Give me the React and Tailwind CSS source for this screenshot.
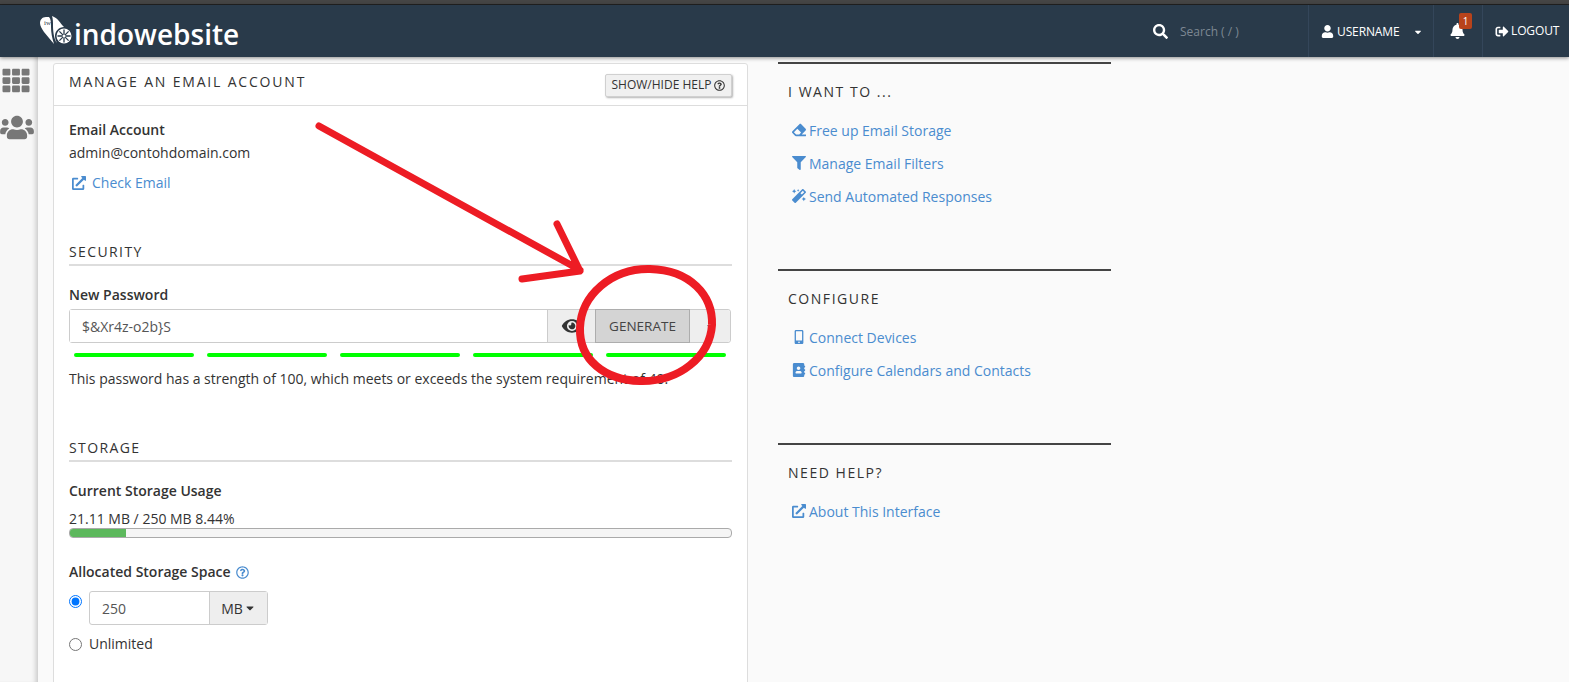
import {
  FaSearch,
  FaUser,
  FaBell,
  FaSignOutAlt,
  FaCaretDown,
  FaTh,
  FaUsers,
  FaExternalLinkAlt,
  FaRegQuestionCircle,
  FaEye,
  FaEraser,
  FaFilter,
  FaMagic,
  FaMobileAlt,
  FaAddressBook,
} from 'react-icons/fa';

const sidebarGroups = [
  {
    title: 'I WANT TO ...',
    height: 'h-[207px]',
    links: [
      { label: 'Free up Email Storage', icon: FaEraser },
      { label: 'Manage Email Filters', icon: FaFilter },
      { label: 'Send Automated Responses', icon: FaMagic },
    ],
  },
  {
    title: 'CONFIGURE',
    height: 'h-[174px]',
    links: [
      { label: 'Connect Devices', icon: FaMobileAlt },
      { label: 'Configure Calendars and Contacts', icon: FaAddressBook },
    ],
  },
  {
    title: 'NEED HELP?',
    height: 'h-[150px]',
    links: [{ label: 'About This Interface', icon: FaExternalLinkAlt }],
  },
];

const strengthBars = [0, 1, 2, 3, 4];

function SectionTitle({ children }) {
  return (
    <div className="h-[24px] border-b-2 border-[#dddddd] text-[14px] leading-[20px] font-medium tracking-[0.1em] text-[#333333]">
      {children}
    </div>
  );
}

function Logo() {
  return (
    <div className="flex items-center ml-[40px] text-white">
      <svg width="36" height="30" viewBox="0 0 36 30" className="mt-[-1px]">
        <path d="M6 1 C2 1 0 4 0 7 C0 10 2 13 4 16 L14 28 C12 22 11 16 11 11 C11 7 11 3 9 1 Z" fill="#fff" />
        <path d="M12 0 C18 2 20 7 24 11 C19 11 15 15 15 20 C15 23 16 25 17 27 C14 24 13 15 13 10 C13 6 13 3 12 0 Z" fill="#fff" />
        <circle cx="24" cy="20" r="7.5" fill="#fff" />
        <g stroke="#293a4a" strokeWidth="1.3">
          <path d="M24 13.5v13M17.5 20h13M19.4 15.4l9.2 9.2M28.6 15.4l-9.2 9.2" />
        </g>
        <circle cx="24" cy="20" r="1.5" fill="#fff" />
        <text x="4" y="9" fontSize="7" fontFamily="'Liberation Serif', serif" fill="#293a4a">iw</text>
      </svg>
      <span className="font-['Open_Sans',sans-serif] text-[28px] leading-[34px] font-semibold ml-[-2px] mt-[5px]">indowebsite</span>
    </div>
  );
}

function Header() {
  return (
    <header className="h-[52px] shrink-0 bg-[#293a4a] flex items-stretch text-white shadow-[0_1px_4px_rgba(0,0,0,0.45)] relative z-10">
      <Logo />
      <div className="ml-auto flex items-center pt-[1px]">
        <FaSearch className="w-[15px] h-[15px] mr-[12px]" />
        <span className="w-[128px] text-[12px] text-[#7d8893]">Search ( / )</span>
      </div>
      <div className="w-[125px] border-l border-[#34465a] flex items-center pt-[1px] pl-[12px] text-[12px] font-medium tracking-[-0.01em]">
        <FaUser className="w-[13px] h-[13px] mr-[3px]" />
        <span>USERNAME</span>
        <FaCaretDown className="w-[10px] h-[10px] ml-[13px]" />
      </div>
      <div className="w-[49px] border-l border-[#34465a] flex items-center pl-[16px]">
        <div className="relative">
          <FaBell className="w-[15px] h-[16px]" />
          <span className="absolute top-[-10px] left-[9px] w-[13px] h-[16px] rounded-[2px] bg-[#b8431b] text-[10px] leading-[16px] text-center text-white">1</span>
        </div>
      </div>
      <div className="w-[87px] border-l border-[#34465a] flex items-center pl-[12px] text-[12px] font-medium tracking-[-0.01em]">
        <FaSignOutAlt className="w-[14px] h-[13px] mr-[2px]" />
        <span>LOGOUT</span>
      </div>
    </header>
  );
}

function ManageCard() {
  return (
    <section className="w-[695px] h-[640px] mt-[6px] bg-white border border-[#dddddd] rounded-t-[3px]">
      <div className="h-[42px] border-b border-[#dddddd] flex items-center justify-between pl-[15px] pr-[15px]">
        <h2 className="text-[14px] font-medium tracking-[0.13em] text-[#333333] mt-[-6px]">MANAGE AN EMAIL ACCOUNT</h2>
        <button className="h-[23px] w-[127px] mt-[1px] flex items-center justify-center gap-[3px] bg-[#f0f0f0] border border-[#d0d0d0] rounded-[2px] text-[12px] text-[#333333] shadow-[1px_1px_2px_rgba(0,0,0,0.3)]">
          SHOW/HIDE HELP
          <FaRegQuestionCircle className="w-[11px] h-[11px]" />
        </button>
      </div>

      <div className="px-[15px]">
        <div className="mt-[14px] text-[14px] leading-[20px] font-semibold text-[#333333]">Email Account</div>
        <div className="mt-[3px] text-[14px] leading-[20px] text-[#333333]">admin@contohdomain.com</div>
        <a className="mt-[10px] flex items-center gap-[6px] pl-[3px] text-[14px] leading-[20px] text-[#4a8ccf]">
          <FaExternalLinkAlt className="w-[14px] h-[14px]" />
          Check Email
        </a>

        <div className="mt-[49px]">
          <SectionTitle>SECURITY</SectionTitle>
        </div>
        <div className="mt-[19px] text-[14px] leading-[20px] font-semibold text-[#333333]">New Password</div>
        <div className="mt-[4px] h-[34px] w-[662px] flex border border-[#cccccc] rounded-[3px] text-[14px]">
          <div className="w-[477px] flex items-center pl-[12px] text-[#555555] bg-white">{'$&Xr4z-o2b}S'}</div>
          <div className="w-[48px] border-l border-[#cccccc] bg-[#eeeeee] flex items-center justify-center text-[#333333]">
            <FaEye className="w-[22px] h-[18px] mr-[-1px]" />
          </div>
          <div className="w-[95px] border border-[#adadad] my-[-1px] bg-[#d4d4d4] flex items-center justify-center text-[13.5px] text-[#444444]">GENERATE</div>
          <div className="flex-1 bg-[#eeeeee] rounded-r-[3px] flex items-center justify-center text-[#333333]">
            <FaCaretDown className="w-[11px] h-[11px]" />
          </div>
        </div>
        <div className="mt-[10px] pl-[5px] flex gap-[13px]">
          {strengthBars.map((bar) => (
            <div key={bar} className="w-[120px] h-[4px] rounded-full bg-[#00ff00]" />
          ))}
        </div>
        <p className="mt-[12px] text-[14px] leading-[20px] text-[#333333] whitespace-nowrap">
          This password has a strength of 100, which meets or exceeds the system requirement of 40.
        </p>

        <div className="mt-[49px]">
          <SectionTitle>STORAGE</SectionTitle>
        </div>
        <div className="mt-[19px] text-[14px] leading-[20px] font-semibold text-[#333333]">Current Storage Usage</div>
        <div className="mt-[8px] text-[14px] leading-[20px] text-[#333333]">21.11 MB / 250 MB 8.44%</div>
        <div className="mt-[-1px] h-[10px] w-[663px] rounded-[4px] bg-[#f5f5f5] border border-[#aaaaaa] overflow-hidden">
          <div className="h-full w-[8.44%] bg-[#5cb85c]" />
        </div>
        <div className="mt-[24px] flex items-center gap-[5px] text-[14px] leading-[20px] font-semibold text-[#333333]">
          Allocated Storage Space
          <FaRegQuestionCircle className="w-[13px] h-[13px] text-[#4a8ccf]" />
        </div>
        <div className="mt-[9px] flex items-start">
          <input type="radio" name="quota" defaultChecked className="mt-[4px] m-0 w-[13px] h-[13px]" />
          <div className="ml-[7px] h-[34px] w-[179px] flex border border-[#cccccc] rounded-[3px] text-[14px]">
            <div className="w-[119px] pl-[12px] flex items-center text-[#555555]">250</div>
            <div className="flex-1 border-l border-[#cccccc] bg-[#eeeeee] flex items-center justify-center gap-[1px] text-[#333333]">
              MB
              <FaCaretDown className="w-[12px] h-[12px]" />
            </div>
          </div>
        </div>
        <div className="mt-[9px] flex items-center text-[14px] leading-[20px] text-[#333333]">
          <input type="radio" name="quota" className="m-0 w-[13px] h-[13px]" />
          <span className="ml-[7px]">Unlimited</span>
        </div>
      </div>
    </section>
  );
}

function RightColumn() {
  return (
    <aside className="w-[333px] ml-[30px] pt-[5px] shrink-0">
      {sidebarGroups.map((group) => (
        <div key={group.title} className={`${group.height} border-t-2 border-[#444444]`}>
          <h3 className="mt-[18px] pl-[10px] text-[14px] leading-[20px] font-medium tracking-[0.11em] text-[#333333]">{group.title}</h3>
          <ul className="mt-[18px] pl-[10px] flex flex-col gap-[13px]">
            {group.links.map((link) => {
              const Icon = link.icon;
              return (
                <li key={link.label} className="flex items-center h-[20px] text-[14px] text-[#4a8ccf]">
                  <span className="w-[21px] flex justify-center">
                    <Icon className="w-[14px] h-[14px]" />
                  </span>
                  <span>{link.label}</span>
                </li>
              );
            })}
          </ul>
        </div>
      ))}
    </aside>
  );
}

export default function App() {
  return (
    <div className="relative h-[682px] overflow-hidden flex flex-col bg-[#fafafa] font-['Open_Sans',sans-serif]">
      <div className="h-[5px] shrink-0 bg-[#454545] border-b border-[#222222]" />
      <Header />
      <div className="flex flex-1 min-h-0">
        <nav className="w-[38px] shrink-0 flex flex-col items-center pt-[10px] gap-[20px] text-[#777777] bg-[#f7f7f7] shadow-[inset_-5px_0_5px_-3px_rgba(0,0,0,0.2)]">
          <FaTh className="w-[30px] h-[27px] ml-[-6px]" />
          <FaUsers className="w-[34px] h-[27px] ml-[-4px]" />
        </nav>
        <main className="flex pl-[15px]">
          <ManageCard />
          <RightColumn />
        </main>
      </div>

      {/* red marker annotation on top of the screenshot */}
      <svg className="absolute inset-0 pointer-events-none" width="1569" height="682" fill="none" stroke="#ed1c24" strokeLinecap="round" strokeLinejoin="round">
        <path d="M319 126 L580 270 M557 224 L580 271 L522 279" strokeWidth="7" />
        <path d="M650 269 C690 270 713 295 712 325 C710 356 680 382 640 381 C605 380 579 360 580 328 C581 295 612 268 650 269 Z" strokeWidth="8" />
      </svg>
    </div>
  );
}
